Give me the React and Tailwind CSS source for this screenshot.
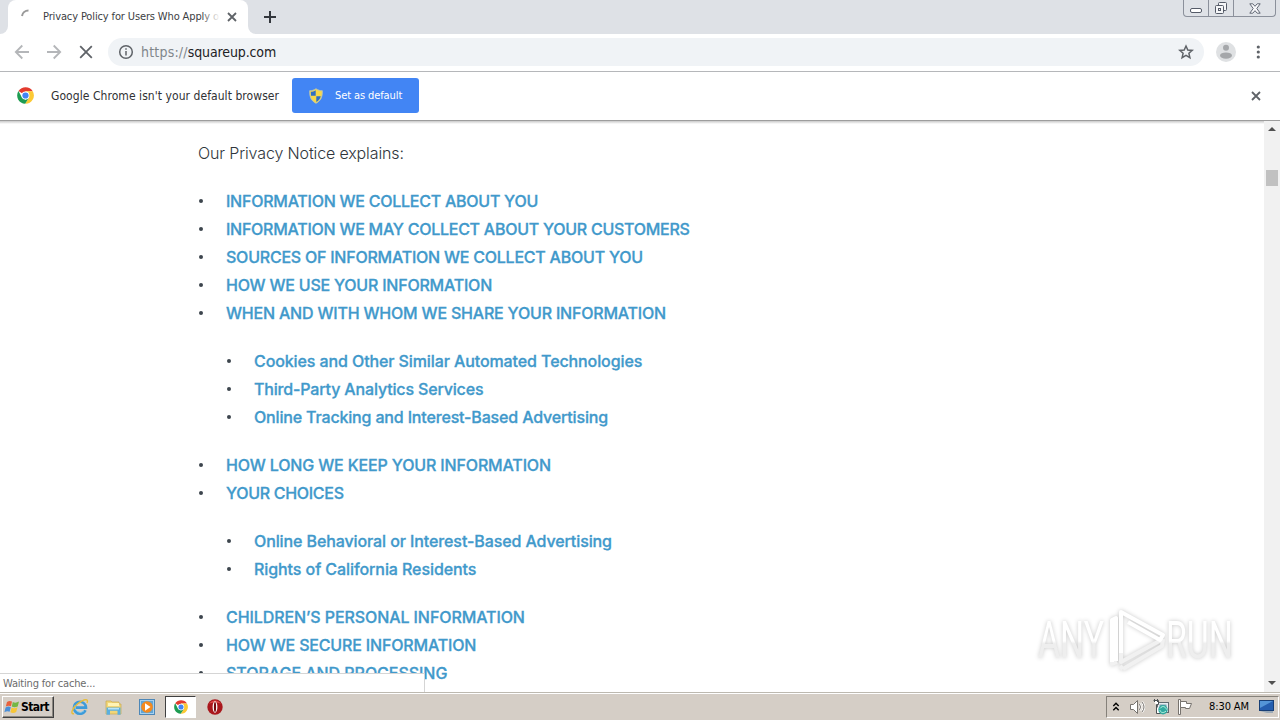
import React from 'react';

const sections = [
  {
    items: [
      { label: 'INFORMATION WE COLLECT ABOUT YOU', tracking: 'tracking-[-0.25px]' },
      { label: 'INFORMATION WE MAY COLLECT ABOUT YOUR CUSTOMERS', tracking: 'tracking-[-0.26px]' },
      { label: 'SOURCES OF INFORMATION WE COLLECT ABOUT YOU', tracking: 'tracking-[-0.23px]' },
      { label: 'HOW WE USE YOUR INFORMATION', tracking: 'tracking-[-0.22px]' },
      { label: 'WHEN AND WITH WHOM WE SHARE YOUR INFORMATION', tracking: 'tracking-[-0.2px]' },
    ],
  },
  {
    nested: true,
    items: [
      { label: 'Cookies and Other Similar Automated Technologies', tracking: 'tracking-[-0.1px]' },
      { label: 'Third-Party Analytics Services', tracking: 'tracking-[-0.16px]' },
      { label: 'Online Tracking and Interest-Based Advertising', tracking: 'tracking-[-0.16px]' },
    ],
  },
  {
    items: [
      { label: 'HOW LONG WE KEEP YOUR INFORMATION', tracking: 'tracking-[-0.15px]' },
      { label: 'YOUR CHOICES', tracking: 'tracking-[-0.3px]' },
    ],
  },
  {
    nested: true,
    items: [
      { label: 'Online Behavioral or Interest-Based Advertising', tracking: 'tracking-[-0.1px]' },
      { label: 'Rights of California Residents', tracking: 'tracking-[-0.08px]' },
    ],
  },
  {
    items: [
      { label: 'CHILDREN’S PERSONAL INFORMATION', tracking: 'tracking-[-0.09px]' },
      { label: 'HOW WE SECURE INFORMATION', tracking: 'tracking-[-0.17px]' },
      { label: 'STORAGE AND PROCESSING', tracking: 'tracking-[-0.04px]' },
    ],
  },
];

const ChromeLogo = ({ className }) => (
  <svg className={className} viewBox="0 0 48 48">
    <path fill="#e33b2e" d="M24 24 L4.1 11.5 A23.5 23.5 0 0 1 44.4 12.3 L24 12.3 Z" />
    <path fill="#fcc934" d="M24 12.3 H44.4 A23.5 23.5 0 0 1 23 47.5 L34.2 29.9 Z" />
    <path fill="#1e9c52" d="M34.2 29.9 L23 47.5 A23.5 23.5 0 0 1 4.1 11.5 L13.9 29.9 L24 35.7 Z" />
    <circle cx="24" cy="24" r="11.2" fill="#fff" />
    <circle cx="24" cy="24" r="8.8" fill="#4285f4" />
  </svg>
);

const CloseIcon = ({ className }) => (
  <svg className={className} viewBox="0 0 10 10" fill="none" stroke="currentColor" strokeWidth="1.8">
    <path d="M1 1l8 8M9 1l-8 8" />
  </svg>
);

const ShieldIcon = () => (
  <svg className="h-4 w-4" viewBox="0 0 16 16">
    <path fill="#f7d84a" d="M8 0.5C6 2 4 2.5 1.5 2.5C1.3 9 3 13 8 15.5C13 13 14.7 9 14.5 2.5C12 2.5 10 2 8 .5Z" />
    <path fill="#2f6fc4" d="M7.7 2.2C6.2 3.2 4.5 3.7 2.8 3.8L3 7.8H7.7Z M8.3 8.3H12.8C12 11 10.5 13 8.3 14.1Z" />
    <path fill="none" stroke="#a9bfc9" strokeWidth=".8" d="M8 .8C6 2.2 4 2.7 1.7 2.8C1.5 9 3.2 12.8 8 15.2C12.8 12.8 14.5 9 14.3 2.8C12 2.7 10 2.2 8 .8Z" />
  </svg>
);

const TabStrip = () => (
  <div className="flex h-[34px] items-start justify-between bg-[#dee1e6]">
    <div className="flex h-full items-center">
      <div className="flex h-full w-2 items-end bg-white">
        <div className="h-full w-2 rounded-br-lg bg-[#dee1e6]" />
      </div>
      <div className="flex h-full w-[240px] items-center rounded-t-lg bg-white pl-3">
        <svg className="h-4 w-4 shrink-0" viewBox="0 0 16 16" fill="none" stroke="#999" strokeWidth="2">
          <path d="M2 7A6.5 6.5 0 0 1 8.5 1.5" />
        </svg>
        <div className="relative ml-[7px] w-[177px] whitespace-nowrap pt-px text-[11px] tracking-[-0.13px] text-[#3c4043]">
          Privacy Policy for Users Who Apply o
          <div className="absolute inset-y-0 right-0 w-4 bg-gradient-to-r from-white/20 to-white" />
        </div>
        <CloseIcon className="ml-[7px] h-[10px] w-[10px] text-[#5f6368]" />
      </div>
      <div className="flex h-full w-2 bg-white">
        <div className="h-full w-2 rounded-bl-lg bg-[#dee1e6]" />
      </div>
      <svg className="ml-2 h-3 w-3" viewBox="0 0 12 12" stroke="#33373d" strokeWidth="2">
        <path d="M6 0v12M0 6h12" />
      </svg>
    </div>

    {/* window buttons */}
    <div className="mr-1 flex h-[17px] w-[93px] rounded-b-[4px] border border-t-0 border-[#8b909b] bg-[#dfe2e7]">
      <div className="flex w-[25px] items-end justify-center border-r border-[#8b909b] pb-[3px]">
        <div className="h-[5px] w-[12px] rounded-[2px] border border-[#555b68] bg-white" />
      </div>
      <div className="flex w-[25px] items-center justify-center border-r border-[#8b909b]">
        <svg className="h-[14px] w-[14px]" viewBox="0 0 14 14" fill="#f5f6f8" stroke="#555b68">
          <rect x="4.5" y="1.5" width="8" height="8" rx="1" />
          <rect x="1.5" y="4.5" width="8" height="8" rx="1" />
          <rect x="4.5" y="7.5" width="2" height="2" />
        </svg>
      </div>
      <div className="flex flex-1 items-center justify-center">
        <svg className="h-[11px] w-[12px]" viewBox="0 0 12 11" fill="#f8f8fa" stroke="#626875">
          <path d="M.8.8h3L6 3.3 8.2.8h3L7.8 5.5l3.4 4.7h-3L6 7.7 3.8 10.2h-3l3.4-4.7Z" />
        </svg>
      </div>
    </div>
  </div>
);

const Toolbar = () => (
  <div className="flex h-[38px] items-center border-b border-[#b5b7ba] bg-white pb-px pl-[14px]">
    <svg className="h-4 w-4" viewBox="0 0 16 16" fill="none" stroke="#b4b6b9" strokeWidth="1.8">
      <path d="M15 8H2M8.3 1.5L1.8 8l6.5 6.5" />
    </svg>
    <svg className="ml-4 h-4 w-4" viewBox="0 0 16 16" fill="none" stroke="#b4b6b9" strokeWidth="1.8">
      <path d="M1 8h13M7.7 1.5L14.2 8l-6.5 6.5" />
    </svg>
    <svg className="ml-4 h-4 w-4" viewBox="0 0 16 16" fill="none" stroke="#5f6368" strokeWidth="1.8">
      <path d="M2.2 2.2l11.6 11.6M13.8 2.2L2.2 13.8" />
    </svg>
    <div className="ml-[14px] flex h-7 w-[1096px] items-center rounded-full bg-[#f0f3f6] pl-[10px] pr-[10px]">
      <svg className="h-4 w-4" viewBox="0 0 16 16" fill="none" stroke="#5f6368" strokeWidth="1.5">
        <circle cx="8" cy="8" r="6.3" />
        <path d="M8 7v4.5M8 4.3v1.5" />
      </svg>
      <div className="ml-[7px] flex-1 whitespace-nowrap text-[14px] text-[#202124]">
        <span className="tracking-[0.2px] text-[#80868b]">https://</span>
        <span className="tracking-[-0.12px]">squareup.com</span>
      </div>
      <svg className="h-4 w-4" viewBox="0 0 16 16" fill="none" stroke="#5f6368" strokeWidth="1.5">
        <path d="M8 2l1.8 4 4.4.4-3.3 2.9 1 4.3L8 11.3l-3.9 2.3 1-4.3-3.3-2.9L6.2 6Z" />
      </svg>
    </div>
    <svg className="ml-3 h-5 w-5" viewBox="0 0 20 20">
      <circle cx="10" cy="10" r="10" fill="#dfe1e3" />
      <circle cx="10" cy="5.8" r="3" fill="#a5a7aa" />
      <ellipse cx="10" cy="13.6" rx="6" ry="3.2" fill="#a5a7aa" />
    </svg>
    <svg className="ml-[14px] h-4 w-4" viewBox="0 0 16 16" fill="#5f6368">
      <circle cx="8.3" cy="3" r="1.6" />
      <circle cx="8.3" cy="8" r="1.6" />
      <circle cx="8.3" cy="13" r="1.6" />
    </svg>
  </div>
);

const InfoBar = () => (
  <div className="flex h-[49px] items-center border-b border-[#9d9d9d] bg-white pb-px pl-[17px] pr-[19px]">
    <ChromeLogo className="h-[17px] w-[17px]" />
    <span className="ml-[17px] w-[229px] whitespace-nowrap text-[12px] tracking-[0.06px] text-[#303134]">
      Google Chrome isn't your default browser
    </span>
    <button className="ml-3 flex h-[35px] w-[127px] items-center rounded-[3px] bg-[#4285f4] pl-4 text-white">
      <ShieldIcon />
      <span className="ml-[11px] whitespace-nowrap pt-px text-[11px] tracking-[-0.1px]">Set as default</span>
    </button>
    <CloseIcon className="ml-auto h-[10px] w-[10px] text-[#5f6368]" />
  </div>
);

const Watermark = () => (
  <div className="absolute left-[1038px] top-[608px] flex h-[66px] w-[196px] items-center drop-shadow-[0_0_2px_rgba(0,0,0,0.22)]">
    <div className="w-[70px] shrink-0">
      <span className="inline-block origin-left scale-x-[0.65] bg-gradient-to-b from-white from-50% to-[#eeeeee] to-55% bg-clip-text text-[52px] leading-none text-transparent [font-family:Roboto,sans-serif]">ANY</span>
    </div>
    <svg className="h-[66px] w-[58px] shrink-0" viewBox="0 0 58 66" fill="none" strokeWidth="4" strokeLinejoin="round">
      <path stroke="#f1f1f1" d="M13 45V54L55 31M4 54V56L9 54M15 61L54 38L55 31M15 61L12 58" />
      <path stroke="#fff" d="M13 45V4L55 27L52 32L20 14M4 54V12L8 10V53" />
    </svg>
    <div className="w-[68px] shrink-0">
      <span className="inline-block origin-left scale-x-[0.65] bg-gradient-to-b from-white from-50% to-[#eeeeee] to-55% bg-clip-text text-[52px] leading-none text-transparent [font-family:Roboto,sans-serif]">RUN</span>
    </div>
  </div>
);

const Page = () => (
  <div className="flex min-h-0 flex-1 overflow-hidden bg-white">
    <main className="min-w-0 flex-1 overflow-hidden pl-[198px] text-[16px] leading-7 [font-family:Inter,sans-serif]">
      <div className="-ml-[198px] h-[3px] bg-gradient-to-b from-[#c9c9c9] to-white" />
      <p className="mt-[15px] font-light tracking-[-0.13px] text-[#30363c]">Our Privacy Notice explains:</p>
      {sections.map((section, i) => (
        <ul key={i} className={section.nested ? 'mt-5 pl-7' : 'mt-5'}>
          {section.items.map((item) => (
            <li key={item.label} className="flex h-7 items-center whitespace-nowrap">
              <span className="ml-px mr-[23px] h-1 w-1 rounded-full bg-[#3d454d]" />
              <a className={`font-medium text-[#4199cb] [-webkit-text-stroke:0.3px_#4199cb] ${item.tracking}`}>{item.label}</a>
            </li>
          ))}
        </ul>
      ))}
    </main>
    <div className="flex w-4 flex-col items-center justify-between bg-[#f1f1f1]">
      <div className="flex flex-col items-center">
        <svg className="mt-[6px] h-1 w-2" viewBox="0 0 8 4"><path fill="#505050" d="M0 4L4 0l4 4Z" /></svg>
        <div className="mt-[39px] h-4 w-3 bg-[#c1c1c1]" />
      </div>
      <svg className="mb-[7px] h-1 w-2" viewBox="0 0 8 4"><path fill="#505050" d="M0 0h8L4 4Z" /></svg>
    </div>
  </div>
);

const Taskbar = () => (
  <div className="flex h-7 items-center justify-between border-t border-[#bdb9b0] bg-[#d5cec6] shadow-[inset_0_1px_0_#fff]">
    <div className="flex items-center">
      <button className="ml-[2px] flex h-[22px] w-[52px] items-center border border-b-[#404040] border-l-white border-r-[#404040] border-t-white pl-px text-[12px] font-bold text-black shadow-[inset_-1px_-1px_0_#8b8780]">
        <svg className="h-4 w-4 shrink-0" viewBox="0 0 16 16">
          <path fill="#e8623d" d="M3 3C5 1.5 6.5 1.7 8 2.6L7 7.3C5.5 6.4 4 6.4 1.8 7.5Z" />
          <path fill="#74b744" d="M8.8 3C10.5 4 12.5 4 15 2.6L13.7 7.4C11.5 8.5 9.4 8.4 7.8 7.6Z" />
          <path fill="#4a8fd8" d="M1.6 8.4C3.5 7.3 5.2 7.3 6.8 8.2L5.6 12.8C4.2 12 2.5 12 .4 13.2Z" />
          <path fill="#f7c637" d="M7.6 8.5C9.4 9.5 11.2 9.4 13.5 8.3L12.2 13C10 14.2 8.2 14.1 6.4 13.2Z" />
        </svg>
        <span className="ml-px tracking-[-0.6px]">Start</span>
      </button>
      <svg className="ml-[17px] h-[18px] w-[18px]" viewBox="0 0 18 18" fill="none">
        <path stroke="#3d9bd9" strokeWidth="2.6" d="M14.5 12.2A6 6 0 1 1 15 9.6H5" />
        <path stroke="#75c8f3" strokeWidth=".8" d="M13 13A5.6 5.6 0 0 1 4 7" />
        <path stroke="#e8bd38" strokeWidth="1.4" d="M3 15.5C-1 17 1 10 7 5.5S18 0 16 5" />
      </svg>
      <svg className="ml-4 h-[18px] w-[17px]" viewBox="0 0 17 18">
        <path fill="#f1d678" stroke="#c9aa4e" strokeWidth=".7" d="M1 3h5l1 1h7v2h2v10H1Z" />
        <path fill="#fff4b5" d="M3 5h11v3H3Z" />
        <path fill="#5aafe0" d="M1.5 9.5h14v7.2h-3v-3.9H5v3.9H1.5Z" />
        <path fill="#b9e4f7" d="M3 10h11v1.5H3Z" />
      </svg>
      <svg className="ml-[17px] h-4 w-4" viewBox="0 0 16 16">
        <rect x=".5" y=".5" width="15" height="15" fill="#a6d1f0" stroke="#4d87b7" />
        <rect x="2" y="2" width="12" height="12" fill="#60a5d6" />
        <circle cx="8" cy="8" r="5.8" fill="#f58a1e" />
        <path fill="#fff" d="M6 4.2L11.5 8 6 11.8Z" />
      </svg>
      <div className="ml-[10px] flex h-[22px] w-[31px] items-center justify-center border border-b-white border-l-[#404040] border-r-white border-t-[#404040] bg-white">
        <ChromeLogo className="h-[14px] w-[14px]" />
      </div>
      <svg className="ml-[11px] h-4 w-4" viewBox="0 0 16 16">
        <circle cx="8" cy="8" r="7.7" fill="#a9171c" />
        <path fill="#df4949" d="M2 5A7 7 0 0 1 14 5C11 3 5 3 2 5Z" />
        <ellipse cx="8" cy="8" rx="2.4" ry="5.8" fill="#fff" />
        <ellipse cx="8" cy="8" rx="1.1" ry="5" fill="#74080d" />
      </svg>
    </div>

    {/* notification area */}
    <div className="mr-px mt-px flex h-[22px] w-[173px] items-center border border-b-white border-l-[#85817a] border-r-white border-t-[#85817a]">
      <svg className="ml-[5px] h-[10px] w-[8px]" viewBox="0 0 8 10" fill="none" stroke="#000" strokeWidth="1.4">
        <path d="M1.3 4L4 1.3 6.7 4M1.3 8.2L4 5.5l2.7 2.7" />
      </svg>
      <svg className="ml-[9px] h-4 w-[17px]" viewBox="0 0 17 16" stroke="#77736e">
        <path fill="#fff" d="M1.5 5.5h3l4-4v13l-4-4h-3Z" />
        <path fill="none" stroke="#fff" strokeWidth="2.5" d="M10.5 5Q12.5 8 10.5 11M13 3q4 5 0 10" />
        <path fill="none" d="M10.5 5Q12.5 8 10.5 11M13 3q4 5 0 10" />
      </svg>
      <svg className="ml-[7px] h-4 w-4" viewBox="0 0 16 16">
        <rect x="4.5" y="3.5" width="11" height="10" fill="#e7edf0" stroke="#626970" />
        <rect x="6.5" y="5.5" width="7" height="6" fill="#799cae" />
        <path fill="#fff" stroke="#4d5254" d="M.5 1.5h5v4h-2V14.5h4v-1M1.5 0v3M4.5 0v3" />
        <circle cx="10" cy="10.8" r="4.7" fill="#31a9a0" />
        <path fill="none" stroke="#b6f1dd" d="M7 9.5c3-4 6-1 6.5 1M13 12c-3 3-6 1-6-1" />
      </svg>
      <svg className="ml-2 h-4 w-4" viewBox="0 0 16 16" fill="#fff" stroke="#77736e">
        <path d="M1.5.5h2v15h-2Z" />
        <path d="M3.5 2.5h6v2h5L12.5 9.5H8.5v-1h-5Z" />
      </svg>
      <span className="ml-[16px] w-[42px] whitespace-nowrap pt-px text-[11px] tracking-[-0.1px] text-black">8:30 AM</span>
      <svg className="ml-[8px] h-[14px] w-[15px]" viewBox="0 0 15 14">
        <rect x=".5" y=".5" width="14" height="10" fill="#255eaf" stroke="#183f76" />
        <path fill="#5495d7" d="M1 1h13L1 8Z" />
        <path fill="#9caab7" d="M1 11h13v2H8Z" />
      </svg>
    </div>
  </div>
);

export default function App() {
  return (
    <div className="relative flex h-[720px] w-[1280px] flex-col overflow-hidden bg-white [font-family:'DejaVu_Sans_Condensed','DejaVu_Sans',sans-serif]">
      <TabStrip />
      <Toolbar />
      <InfoBar />
      <Page />
      <Taskbar />
      {/* page load status */}
      <div className="absolute left-0 top-[673px] flex h-[19px] w-[425px] items-center border-r border-t border-[#d5d5d5] bg-white pl-[3px] pt-[2px] text-[11px] tracking-[-0.18px] text-[#6c6c6c]">
        Waiting for cache...
      </div>
      <Watermark />
    </div>
  );
}
